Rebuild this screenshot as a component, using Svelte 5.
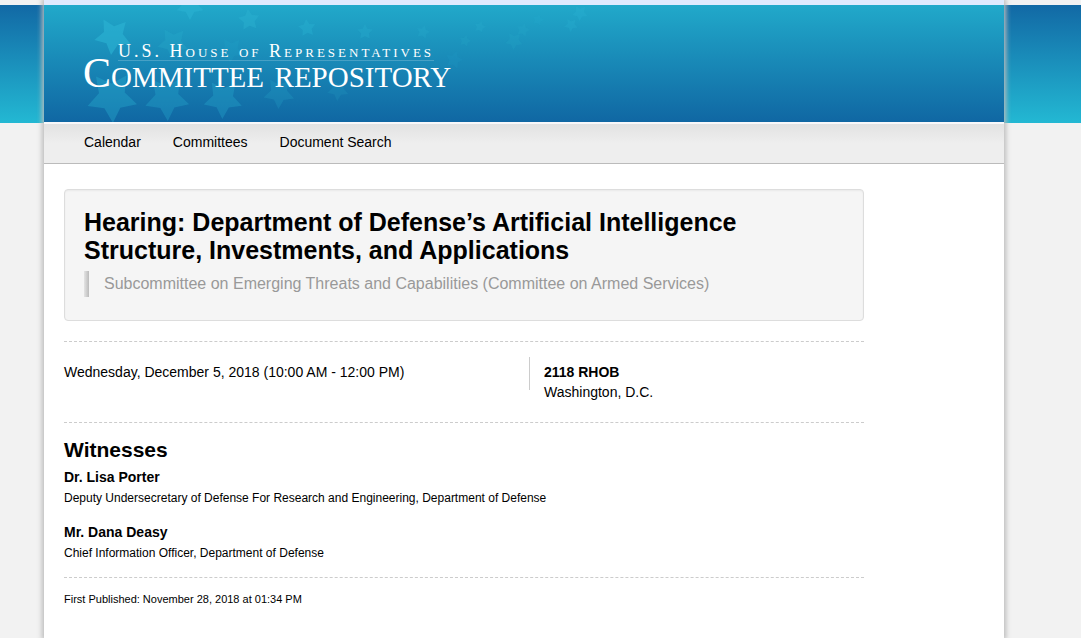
<script>
	const links = ['Calendar', 'Committees', 'Document Search'];

	const witnesses = [
		{
			name: 'Dr. Lisa Porter',
			role: 'Deputy Undersecretary of Defense For Research and Engineering, Department of Defense'
		},
		{
			name: 'Mr. Dana Deasy',
			role: 'Chief Information Officer, Department of Defense'
		}
	];

	// x, y, radius, rotation, opacity
	const stars = [
		[69, 31, 19, 42, 0.6],
		[146, 1, 14, 36, 0.5],
		[205, 15, 11, -6, 0.4],
		[129, 38, 16, 40, 0.22],
		[68, 92, 26, 34, 0.35],
		[123, 93, 23, 34, 0.3],
		[179, 94, 20, 38, 0.3],
		[235, 88, 16, 38, 0.2],
		[263, 23, 9, -6, 0.35],
		[321, 27, 8, 0, 0.25],
		[379, 27, 7, 15, 0.2],
		[436, 22, 6, 15, 0.2],
		[294, 85, 11, 40, 0.15],
		[187, 45, 13, 40, 0.12],
		[421, 36, 6, 15, 0.15],
		[410, 55, 9, 15, 0.1],
		[470, 36, 9, 40, 0.15],
		[479, 25, 7, 15, 0.15],
		[494, 15, 6, 15, 0.12],
		[536, 8, 8, 40, 0.3],
		[527, 20, 7, 40, 0.25]
	];

	function points(r) {
		return Array.from({ length: 10 }, (_, i) => {
			const a = (Math.PI * i) / 5 - Math.PI / 2;
			const d = i % 2 ? r * 0.52 : r;
			return `${(Math.cos(a) * d).toFixed(2)},${(Math.sin(a) * d).toFixed(2)}`;
		}).join(' ');
	}
</script>

<div class="page">
	<div class="shell">
		<header>
			<svg class="stars" width="600" height="117" aria-hidden="true">
				{#each stars as [x, y, r, turn, opacity]}
					<polygon points={points(r)} transform="translate({x} {y}) rotate({turn})" {opacity} />
				{/each}
			</svg>
			<a class="brand" href="/">
				<span class="house">U.S. House of Representatives</span>
				<span class="repository">Committee repository</span>
			</a>
		</header>

		<nav>
			{#each links as link}
				<a href="/">{link}</a>
			{/each}
		</nav>

		<main>
			<section class="title">
				<h1>Hearing: Department of Defense’s Artificial Intelligence Structure, Investments, and Applications</h1>
				<blockquote>Subcommittee on Emerging Threats and Capabilities (Committee on Armed Services)</blockquote>
			</section>

			<section class="meeting">
				<p>Wednesday, December 5, 2018 (10:00 AM - 12:00 PM)</p>
				<address><strong>2118 RHOB</strong><br />Washington, D.C.</address>
			</section>

			<section class="witnesses">
				<h2>Witnesses</h2>
				{#each witnesses as witness}
					<h3>{witness.name}</h3>
					<p>{witness.role}</p>
				{/each}
			</section>

			<p class="published">First Published: November 28, 2018 at 01:34 PM</p>
		</main>
	</div>
</div>

<style>
	:global(body) {
		margin: 0;
		background: #f2f2f2;
	}

	.page {
		box-sizing: border-box;
		min-height: 100vh;
		padding-right: 33px;
		display: flex;
		justify-content: center;
		background: linear-gradient(#1269a5, #23b8d3) 0 5px / 100% 118px no-repeat #f2f2f2;
		color: #000;
		font-family: 'Liberation Sans', Arial, sans-serif;
		font-size: 14px;
		line-height: 20px;
	}

	.shell {
		flex: 0 1 960px;
		background: #fff;
		border-top: 5px solid #dfeafd;
		box-shadow: 0 0 5px 2px #bbb;
	}

	header {
		position: relative;
		height: 117px;
		overflow: hidden;
		background: linear-gradient(#21a9ca, #1067a3);
	}

	.stars {
		position: absolute;
		inset: 0;
		fill: #2cb4d3;
	}

	.brand {
		position: relative;
		display: flex;
		flex-direction: column;
		align-items: flex-start;
		width: max-content;
		padding: 37px 0 0 39px;
		color: #fff;
		font-family: 'Liberation Serif', 'Times New Roman', serif;
		font-variant: small-caps;
		text-decoration: none;
	}

	.house {
		margin-left: 35px;
		border-bottom: 1px solid #ffffff33;
		font-size: 18px;
		line-height: 18px;
		letter-spacing: 3px;
	}

	.repository {
		font-size: 42px;
		line-height: 24px;
	}

	nav {
		display: flex;
		gap: 32px;
		padding: 8px 40px 11px;
		border-top: 2px solid #f8f8fa;
		border-bottom: 1px solid #bbb;
		background: linear-gradient(#e2e2e2, #eee 50%);
	}

	nav a {
		color: #000;
		text-decoration: none;
	}

	main {
		max-width: 800px;
		padding: 25px 20px;
	}

	h1,
	h2,
	h3,
	p,
	blockquote {
		margin: 0;
	}

	.title {
		padding: 18px 19px 23px;
		border: 1px solid #ddd;
		border-radius: 4px;
		background: #f5f5f5;
		box-shadow: inset 0 1px 2px #0000000d;
	}

	h1 {
		max-width: 680px;
		font-size: 25px;
		line-height: 28px;
	}

	blockquote {
		margin-top: 7px;
		padding-left: 20px;
		background: linear-gradient(90deg, #e4e4e4, #bbb) 0 0 / 5px 100% no-repeat;
		color: #999;
		font-size: 16px;
		line-height: 26px;
	}

	.meeting {
		display: grid;
		grid-template-columns: 465px 1fr;
		margin-top: 20px;
		padding: 15px 0 20px;
		border-top: 1px dashed #ccc;
		border-bottom: 1px dashed #ccc;
	}

	.meeting p {
		padding-top: 5px;
	}

	address {
		padding: 5px 0 0 15px;
		background: linear-gradient(#ccc, #ccc) 0 0 / 1px 33px no-repeat;
		font-style: normal;
	}

	.witnesses {
		padding: 14px 0;
		border-bottom: 1px dashed #ccc;
	}

	h2 {
		font-size: 21px;
		line-height: 26px;
	}

	h3 {
		margin-top: 4px;
		font-size: 14px;
		line-height: 20px;
	}

	.witnesses p {
		padding-top: 1px;
		font-size: 12px;
	}

	.witnesses p + h3 {
		margin-top: 14px;
	}

	.published {
		margin-top: 11px;
		font-size: 11px;
	}
</style>
